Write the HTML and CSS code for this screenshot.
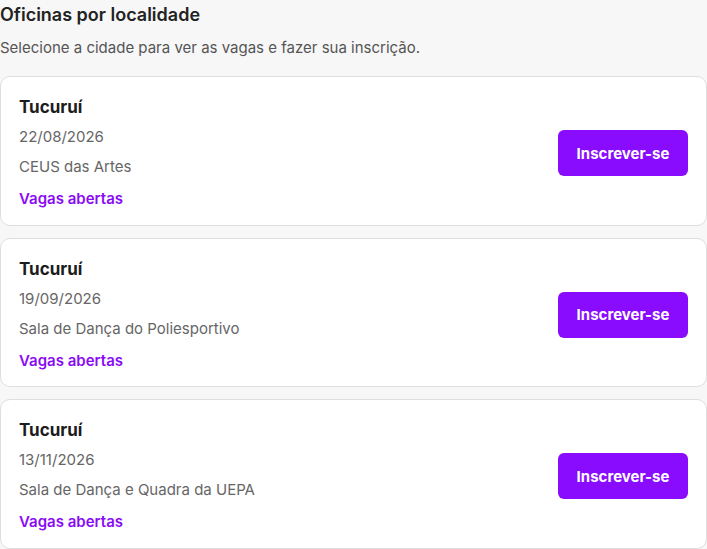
FILE: index.html
```html
<!DOCTYPE html>
<html lang="pt-BR">
<head>
    <meta charset="UTF-8">
    <meta name="viewport" content="width=device-width, initial-scale=1.0">
    <title>Oficinas por localidade</title>
    <link rel="stylesheet" href="styles.css">
</head>
<body>
    <h2 class="page-title">Oficinas por localidade</h2>
    <p class="page-sub">Selecione a cidade para ver as vagas e fazer sua inscrição.</p>

    <div class="list">
        <div class="card">
            <div class="info">
                <div class="city">Tucuruí</div>
                <div class="date">22/08/2026</div>
                <div class="place">CEUS das Artes</div>
                <div class="status">Vagas abertas</div>
            </div>
            <button class="button">Inscrever-se</button>
        </div>

        <div class="card">
            <div class="info">
                <div class="city">Tucuruí</div>
                <div class="date">19/09/2026</div>
                <div class="place">Sala de Dança do Poliesportivo</div>
                <div class="status">Vagas abertas</div>
            </div>
            <button class="button">Inscrever-se</button>
        </div>

        <div class="card">
            <div class="info">
                <div class="city">Tucuruí</div>
                <div class="date">13/11/2026</div>
                <div class="place">Sala de Dança e Quadra da UEPA</div>
                <div class="status">Vagas abertas</div>
            </div>
            <button class="button">Inscrever-se</button>
        </div>
    </div>
</body>
</html>
```

FILE: styles.css
```css
body {
    font-family: Inter, "Noto Sans", sans-serif;
    margin: 0;
    padding: 0;
    background: #f7f7f7;
    color: #222;
}
.page-title {
    font-size: 18px;
    font-weight: 600;
    line-height: 24px;
    margin: 3px 0 0;
    color: #222;
}
.page-sub {
    font-size: 15px;
    line-height: 22px;
    margin: 10px 0 0;
    color: #555;
}
.list {
    display: flex;
    flex-direction: column;
    gap: 12px;
    margin-top: 17px;
    width: 707px;
}
.card {
    background: #fff;
    border: 1px solid #dedede;
    border-radius: 10px;
    padding: 19px 18px 14.5px;
    display: flex;
    align-items: center;
    justify-content: space-between;
}
.city {
    font-size: 17px;
    font-weight: 700;
    line-height: 22px;
    color: #1c1c1c;
}
.date, .place {
    font-size: 15px;
    line-height: 22px;
    color: #666;
}
.date { margin-top: 8px; }
.place { margin-top: 8px; }
.status {
    font-size: 15px;
    font-weight: 600;
    line-height: 22px;
    margin-top: 10px;
    color: #8a0cf5;
}
.button {
    background: #8a0cff;
    color: #fff;
    border: none;
    border-radius: 6px;
    width: 130px;
    height: 46px;
    font-family: inherit;
    font-size: 15px;
    font-weight: 700;
    cursor: pointer;
}
```
